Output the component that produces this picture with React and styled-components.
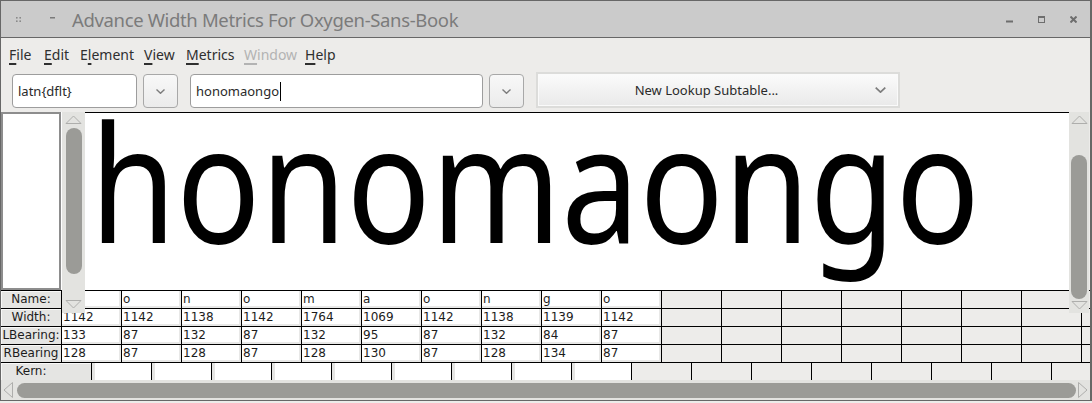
import React from 'react'
import styled, { createGlobalStyle } from 'styled-components'

const GlobalStyle = createGlobalStyle`
  html, body {
    margin: 0;
    padding: 0;
    background: #edecea;
  }
  body {
    width: 1092px;
    height: 403px;
    overflow: hidden;
    font-family: "Noto Sans", "Open Sans", sans-serif;
  }
`

const Window = styled.div`
  width: 1092px;
  height: 401px;
  box-sizing: border-box;
  border: 1px solid #676767;
  border-right-width: 2px;
  background: #edecea;
  display: flex;
  flex-direction: column;
  overflow: hidden;
`

const TitleBar = styled.div`
  height: 36px;
  flex: none;
  border-bottom: 1px solid #676767;
  background: #cbcbcb;
  display: flex;
  align-items: center;
`

const Grip = styled.svg`
  margin-left: 15px;
  flex: none;
`

const Dash = styled.svg`
  margin-left: 29px;
  margin-top: -3px;
  flex: none;
`

const Title = styled.div`
  margin-left: 17px;
  font-size: 18.5px;
  color: #7b7b7b;
  letter-spacing: -0.35px;
  white-space: nowrap;
`

const Controls = styled.div`
  margin-left: auto;
  margin-right: 13px;
  display: flex;
  gap: 25px;
  align-items: center;
`

const MenuBar = styled.div`
  height: 33px;
  flex: none;
  display: flex;
  align-items: center;
  padding-left: 8px;
  font-size: 14px;
  color: #2f2f2f;
`

const MenuItem = styled.div`
  width: ${p => p.$w}px;
  flex: none;
  color: ${p => (p.$disabled ? '#b3b3b3' : '#2f2f2f')};
  white-space: nowrap;

  u {
    text-decoration-thickness: 2px;
    text-underline-offset: 3px;
  }
`

const Toolbar = styled.div`
  height: 41px;
  flex: none;
  box-sizing: border-box;
  display: flex;
  align-items: flex-end;
  padding: 0 0 4px 11px;
  font-size: 13px;
  color: #2a2a2a;
`

const Field = styled.div`
  width: ${p => p.$w}px;
  height: 34px;
  margin-left: ${p => p.$ml || 0}px;
  box-sizing: border-box;
  flex: none;
  border: 1px solid #9d9d9d;
  border-radius: 4px;
  background: #fff;
  display: flex;
  align-items: center;
  padding-left: 5px;
  white-space: nowrap;
`

const Caret = styled.span`
  display: inline-block;
  width: 1px;
  height: 19px;
  background: #000;
  margin-left: 1px;
`

const DropButton = styled.div`
  width: 35px;
  height: 34px;
  margin-left: 6px;
  box-sizing: border-box;
  flex: none;
  border: 1px solid #a8a8a8;
  border-radius: 4px;
  background: linear-gradient(#f8f8f8, #ebebeb);
  display: flex;
  align-items: center;
  justify-content: center;
`

const LookupButton = styled.div`
  width: 364px;
  height: 36px;
  margin-left: 12px;
  box-sizing: border-box;
  flex: none;
  border: 2px solid #dcdcda;
  background: linear-gradient(#fbfbfb, #e9e9e9);
  box-shadow: inset 0 0 0 1px #fafafa;
  display: flex;
  align-items: center;
  padding-right: 12px;
`

const LookupText = styled.div`
  flex: 1;
  text-align: center;
`

const Main = styled.div`
  height: 178px;
  flex: none;
  display: grid;
  grid-template-columns: 60px 1px 23px 984px 20px 1px;
  align-items: start;
`

const SidePanel = styled.div`
  height: 178px;
  box-sizing: border-box;
  border: 2px solid #8d8d8d;
  background: #fff;
`

const WhiteGap = styled.div`
  height: 178px;
  background: #fff;
`

const VScroll = styled.div`
  position: relative;
  z-index: 2;
  height: 201px;
  background: #e3e3e0;
  display: flex;
  flex-direction: column;
  align-items: center;
  padding: 3px 0 ${p => p.$pb}px;
  box-sizing: border-box;
`

const Thumb = styled.div`
  width: 16px;
  height: ${p => p.$h}px;
  margin-top: ${p => p.$mt}px;
  border-radius: 8px;
  background: #9b9b97;
  flex: none;
`

const Spacer = styled.div`
  flex: 1;
`

const Canvas = styled.div`
  height: 178px;
  box-sizing: border-box;
  border-top: 1px solid #000;
  background: #fff;
  overflow: hidden;
`

const Glyphs = styled.div`
  font-family: "Noto Sans", sans-serif;
  font-size: 163px;
  line-height: 1;
  color: #000;
  white-space: nowrap;
  margin: -14px 0 0 5px;
  transform: scaleX(0.855);
  transform-origin: left top;
`

const Table = styled.div`
  flex: none;
  border-top: 1px solid #000;
  font-family: "DejaVu Sans", sans-serif;
  font-size: 12px;
  color: #1c1c1c;
`

const Row = styled.div`
  height: 17px;
  display: flex;
  border-bottom: ${p => (p.$last ? 'none' : '1px solid #000')};
`

const Label = styled.div`
  width: ${p => p.$w}px;
  flex: none;
  box-sizing: border-box;
  padding-right: ${p => p.$w - 60}px;
  background: #e5e5e3;
  box-shadow: inset 1px 1px 0 #f8f8f7;
  line-height: 17px;
  text-align: center;
  white-space: nowrap;
  display: flex;
  justify-content: center;
`

const Cell = styled.div`
  width: 60px;
  flex: none;
  box-sizing: border-box;
  border-left: 1px solid #000;
  padding-left: 1px;
  line-height: 17px;
  white-space: nowrap;
  overflow: hidden;
  background: ${p => (p.$filled ? '#fff' : 'transparent')};
  box-shadow: ${p => (p.$filled ? 'inset -2px -2px 0 #e8e8e7' : 'none')};
`

const KernCell = styled(Cell)`
  box-shadow: ${p => (p.$filled ? 'inset 3px 0 0 #e5e5e3' : 'none')};
`

const Filler = styled.div`
  flex: 1;
  border-left: 1px solid #000;
`

const HScroll = styled.div`
  height: 20px;
  flex: none;
  background: #e3e3e0;
  display: flex;
  align-items: center;
  padding: 0 2px;
`

const HThumb = styled.div`
  flex: 1;
  height: 15px;
  margin: 1px 2px 0 4px;
  border-radius: 8px;
  background: #9b9b97;
`

const Chevron = ({ w = 9, h = 5 }) => (
  <svg width={w} height={h} viewBox="0 0 9 5">
    <polyline points="0.5,0.5 4.5,4.3 8.5,0.5" fill="none" stroke="#7d7d7d" strokeWidth="1.4" />
  </svg>
)

const ArrowUp = () => (
  <svg width="17" height="9" viewBox="0 0 17 9" style={{ flex: 'none' }}>
    <polygon points="1,8.5 8.5,1 16,8.5" fill="none" stroke="#aeaeac" strokeWidth="1" />
  </svg>
)

const ArrowDown = () => (
  <svg width="17" height="9" viewBox="0 0 17 9" style={{ flex: 'none' }}>
    <polygon points="1,0.5 8.5,8 16,0.5" fill="none" stroke="#aeaeac" strokeWidth="1" />
  </svg>
)

const ArrowLeft = () => (
  <svg width="10" height="16" viewBox="0 0 10 16" style={{ flex: 'none' }}>
    <polygon points="9.5,0.5 1,8 9.5,15.5" fill="none" stroke="#aeaeac" strokeWidth="1" />
  </svg>
)

const ArrowRight = () => (
  <svg width="10" height="16" viewBox="0 0 10 16" style={{ flex: 'none' }}>
    <polygon points="0.5,0.5 9,8 0.5,15.5" fill="none" stroke="#aeaeac" strokeWidth="1" />
  </svg>
)

const menus = [
  { key: 'F', rest: 'ile', w: 35 },
  { key: 'E', rest: 'dit', w: 36 },
  { pre: 'E', key: 'l', rest: 'ement', w: 64 },
  { key: 'V', rest: 'iew', w: 42 },
  { key: 'M', rest: 'etrics', w: 58 },
  { key: 'W', rest: 'indow', w: 61, disabled: true },
  { key: 'H', rest: 'elp', w: 40 },
]

const names = ['h', 'o', 'n', 'o', 'm', 'a', 'o', 'n', 'g', 'o']
const widths = [1142, 1142, 1138, 1142, 1764, 1069, 1142, 1138, 1139, 1142]
const lbear = [133, 87, 132, 87, 132, 95, 87, 132, 84, 87]
const rbear = [128, 87, 128, 87, 128, 130, 87, 128, 134, 87]

const rows = [
  { label: 'Name:', values: names },
  { label: 'Width:', values: widths },
  { label: 'LBearing:', values: lbear },
  { label: 'RBearing', values: rbear },
]

const DataRow = ({ label, values }) => (
  <Row>
    <Label $w={60}>{label}</Label>
    {Array.from({ length: 17 }).map((_, i) => (
      <Cell key={i} $filled={i < values.length}>{values[i]}</Cell>
    ))}
    <Filler />
  </Row>
)

export default function App() {
  return (
    <>
      <GlobalStyle />
      <Window>
        <TitleBar>
          <Grip width="5" height="5" viewBox="0 0 5 5">
            <rect x="0" y="0" width="1.6" height="1.6" fill="#8a8a8a" />
            <rect x="3.4" y="0" width="1.6" height="1.6" fill="#8a8a8a" />
            <rect x="0" y="3.4" width="1.6" height="1.6" fill="#8a8a8a" />
            <rect x="3.4" y="3.4" width="1.6" height="1.6" fill="#8a8a8a" />
          </Grip>
          <Dash width="5" height="2" viewBox="0 0 5 2">
            <rect x="0" y="0" width="5" height="1.5" fill="#7b7b7b" />
          </Dash>
          <Title>Advance Width Metrics For Oxygen-Sans-Book</Title>
          <Controls>
            <svg width="7" height="7" viewBox="0 0 7 7">
              <rect x="0" y="4.5" width="7" height="2" fill="#6e6e6e" />
            </svg>
            <svg width="7" height="7" viewBox="0 0 7 7">
              <rect x="0.5" y="0.5" width="6" height="6" fill="none" stroke="#6e6e6e" strokeWidth="1" />
              <rect x="0" y="0" width="7" height="2" fill="#6e6e6e" />
            </svg>
            <svg width="7" height="7" viewBox="0 0 7 7">
              <path d="M0.5 0.5 L6.5 6.5 M6.5 0.5 L0.5 6.5" stroke="#6e6e6e" strokeWidth="2" />
            </svg>
          </Controls>
        </TitleBar>

        <MenuBar>
          {menus.map(m => (
            <MenuItem key={m.key + m.rest} $w={m.w} $disabled={m.disabled}>
              {m.pre}<u>{m.key}</u>{m.rest}
            </MenuItem>
          ))}
        </MenuBar>

        <Toolbar>
          <Field $w={125}>latn{'{'}dflt{'}'}</Field>
          <DropButton><Chevron /></DropButton>
          <Field $w={293} $ml={12}>honomaongo<Caret /></Field>
          <DropButton><Chevron /></DropButton>
          <LookupButton>
            <LookupText>New Lookup Subtable...</LookupText>
            <Chevron w={11} h={6} />
          </LookupButton>
        </Toolbar>

        <Main>
          <SidePanel />
          <WhiteGap />
          <VScroll $pb={4}>
            <ArrowUp />
            <Thumb $mt={4} $h={146} />
            <Spacer />
            <ArrowDown />
          </VScroll>
          <Canvas>
            <Glyphs>honomaongo</Glyphs>
          </Canvas>
          <VScroll $pb={3}>
            <ArrowUp />
            <Thumb $mt={31} $h={144} />
            <Spacer />
            <ArrowDown />
          </VScroll>
          <div />
        </Main>

        <Table>
          {rows.map(r => <DataRow key={r.label} {...r} />)}
          <Row $last>
            <Label $w={90}>Kern:</Label>
            {Array.from({ length: 16 }).map((_, i) => (
              <KernCell key={i} $filled={i < 9} />
            ))}
            <Filler />
          </Row>
        </Table>

        <HScroll>
          <ArrowLeft />
          <HThumb />
          <ArrowRight />
        </HScroll>
      </Window>
    </>
  )
}
